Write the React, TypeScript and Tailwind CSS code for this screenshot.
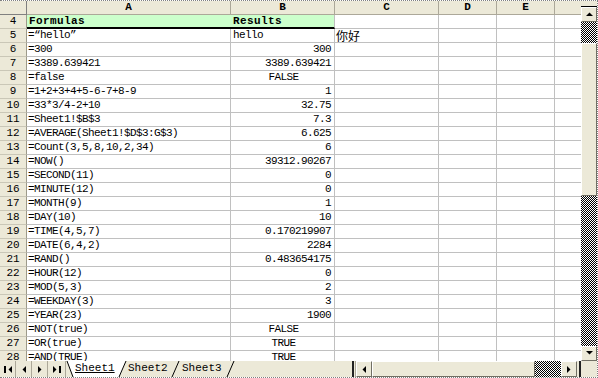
import React, { useId } from 'react';

type Align = 'l' | 'r' | 'c';
const rows: [number, string, string, Align][] = [
  [5, '=“hello”', 'hello', 'l'],
  [6, '=300', '300', 'r'],
  [7, '=3389.639421', '3389.639421', 'r'],
  [8, '=false', 'FALSE', 'c'],
  [9, '=1+2+3+4+5-6-7+8-9', '1', 'r'],
  [10, '=33*3/4-2+10', '32.75', 'r'],
  [11, '=Sheet1!$B$3', '7.3', 'r'],
  [12, '=AVERAGE(Sheet1!$D$3:G$3)', '6.625', 'r'],
  [13, '=Count(3,5,8,10,2,34)', '6', 'r'],
  [14, '=NOW()', '39312.90267', 'r'],
  [15, '=SECOND(11)', '0', 'r'],
  [16, '=MINUTE(12)', '0', 'r'],
  [17, '=MONTH(9)', '1', 'r'],
  [18, '=DAY(10)', '10', 'r'],
  [19, '=TIME(4,5,7)', '0.170219907', 'r'],
  [20, '=DATE(6,4,2)', '2284', 'r'],
  [21, '=RAND()', '0.483654175', 'r'],
  [22, '=HOUR(12)', '0', 'r'],
  [23, '=MOD(5,3)', '2', 'r'],
  [24, '=WEEKDAY(3)', '3', 'r'],
  [25, '=YEAR(23)', '1900', 'r'],
  [26, '=NOT(true)', 'FALSE', 'c'],
  [27, '=OR(true)', 'TRUE', 'c'],
  [28, '=AND(TRUE)', 'TRUE', 'c'],
];

function Checker() {
  const raw = useId();
  const id = 'chk' + raw.replace(/[^a-zA-Z0-9]/g, '');
  return (
    <svg width="100%" height="100%" className="block">
      <defs>
        <pattern id={id} width="2" height="2" patternUnits="userSpaceOnUse">
          <rect width="2" height="2" fill="#ffffff" />
          <rect width="1" height="1" fill="#000000" />
          <rect x="1" y="1" width="1" height="1" fill="#000000" />
        </pattern>
      </defs>
      <rect width="100%" height="100%" fill={`url(#${id})`} />
    </svg>
  );
}

function Btn({ children, className = '' }: { children?: React.ReactNode; className?: string }) {
  return (
    <div
      className={`flex items-center justify-center bg-[#ECE9D8] border border-t-white border-l-white border-b-[#716F64] border-r-[#716F64] ${className}`}
    >
      {children}
    </div>
  );
}

const Up = () => (
  <svg width="7" height="4" className="block"><polygon points="0,4 7,4 3.5,0.5" fill="#000" /></svg>
);
const Down = () => (
  <svg width="7" height="4" className="block"><polygon points="0,0 7,0 3.5,3.5" fill="#000" /></svg>
);
const Left = ({ bar = false }: { bar?: boolean }) => (
  <svg width={bar ? 8 : 4} height="7" className="block">
    {bar && <rect x="0" y="0" width="2" height="7" fill="#000" />}
    <polygon points={bar ? '8,0 8,7 4.5,3.5' : '4,0 4,7 0.5,3.5'} fill="#000" />
  </svg>
);
const Right = ({ bar = false }: { bar?: boolean }) => (
  <svg width={bar ? 8 : 4} height="7" className="block">
    <polygon points="0,0 0,7 3.5,3.5" fill="#000" />
    {bar && <rect x="6" y="0" width="2" height="7" fill="#000" />}
  </svg>
);

const mono = "font-['Liberation_Mono','Noto_Sans_CJK_SC',monospace]";
const cell = 'h-[14px] border-r border-b border-[#C0C0C0] overflow-hidden whitespace-nowrap leading-[13px]';
const rowHead =
  'w-[27px] h-[14px] shrink-0 bg-[#ECE9D8] border-r border-r-[#9D9A8A] border-b border-b-[#CAC7B7] flex items-center justify-center text-[11px] leading-none text-black font-[\'Liberation_Sans\',sans-serif] tracking-normal';
const colHead =
  'h-[14px] shrink-0 bg-[#ECE9D8] border-r border-r-[#ACA899] border-b border-b-[#ACA899] flex items-center justify-center text-[11px] font-bold leading-none tracking-normal';

function Grid() {
  return (
    <div className={`w-[581px] h-[360px] overflow-hidden bg-white ${mono} text-[11px] tracking-[-0.6px] text-black`}>
      {/* header */}
      <div className="flex">
        <div className="w-[27px] h-[14px] shrink-0 bg-[#ECE9D8] border-r border-r-[#808080] border-b border-b-[#808080]" />
        <div className={`${colHead} w-[204px] border-b-[#808080] border-r-[#404040]`}>A</div>
        <div className={`${colHead} w-[104px]`}>B</div>
        <div className={`${colHead} w-[104px]`}>C</div>
        <div className={`${colHead} w-[58px]`}>D</div>
        <div className={`${colHead} w-[58px]`}>E</div>
        <div className={`${colHead} w-[58px]`}></div>
      </div>
      {/* row 4 */}
      <div className="flex">
        <div className={rowHead}>4</div>
        <div className="w-[204px] h-[14px] shrink-0 bg-[#CCFFCC] border-b-2 border-black pl-[2px] font-bold tracking-[0.4px] leading-[12px]">
          Formulas
        </div>
        <div className="w-[104px] h-[14px] shrink-0 bg-[#CCFFCC] border-r border-r-[#C0C0C0] border-b-2 border-black pl-[2px] font-bold tracking-[0.4px] leading-[12px]">
          Results
        </div>
        <div className={`${cell} w-[104px] shrink-0`} />
        <div className={`${cell} w-[58px] shrink-0`} />
        <div className={`${cell} w-[58px] shrink-0`} />
        <div className={`${cell} w-[58px] shrink-0`} />
      </div>
      {rows.map(([n, a, b, al]) => (
        <div className="flex" key={n}>
          <div className={rowHead}>{n}</div>
          <div className={`${cell} w-[204px] shrink-0 pl-[1px]`}>{a}</div>
          <div
            className={`${cell} w-[104px] shrink-0 ${
              al === 'r' ? 'text-right pr-[3px]' : al === 'c' ? 'text-center pl-[2px]' : 'pl-[2px]'
            }`}
          >
            {b}
          </div>
          <div className={`${cell} w-[104px] shrink-0 pl-[1px] tracking-normal flex items-center`}>
            {n === 5 ? (
              <span className="font-['Noto_Sans_CJK_SC',sans-serif] text-[12px] leading-[13px]">你好</span>
            ) : null}
          </div>
          <div className={`${cell} w-[58px] shrink-0`} />
          <div className={`${cell} w-[58px] shrink-0`} />
          <div className={`${cell} w-[58px] shrink-0`} />
        </div>
      ))}
    </div>
  );
}

function VScroll() {
  return (
    <div className="w-[16px] h-[360px] flex flex-col bg-[#ECE9D8]">
      <div className="h-[6px] border-b border-black bg-[#ECE9D8]" />
      <Btn className="h-[16px]">
        <Up />
      </Btn>
      <div className="h-[21px]">
        <Checker />
      </div>
      <div className="h-[164px] bg-[#ECE9D8] border border-t-white border-l-white border-b-[#716F64] border-r-[#716F64]" />
      <div className="flex-1">
        <Checker />
      </div>
      <Btn className="h-[16px]">
        <Down />
      </Btn>
    </div>
  );
}

function Slant({ dir, w, fillLeft = false, fillRight = false }: { dir: 'back' | 'fwd'; w: number; fillLeft?: boolean; fillRight?: boolean }) {
  return (
    <svg width={w} height="16" className="block shrink-0">
      {dir === 'back' ? (
        <>
          {fillRight && <polygon points={`1,0 ${w},0 ${w},16 7,16`} fill="#fff" />}
          <line x1="1" y1="0" x2="7" y2="16" stroke="#000" strokeWidth="1" />
        </>
      ) : (
        <>
          {fillLeft && <polygon points="0,0 8,0 1,16 0,16" fill="#fff" />}
          <line x1="1" y1="16" x2="8" y2="0" stroke="#000" strokeWidth="1" />
        </>
      )}
    </svg>
  );
}

function BottomBar() {
  return (
    <div className="flex h-[16px] bg-[#ECE9D8]">
      <div className="flex w-[66px] shrink-0">
        <div className="w-[16px] flex items-center justify-center border-r border-[#ACA899]">
          <Left bar />
        </div>
        <div className="w-[16px] flex items-center justify-center border-r border-[#ACA899]">
          <Left />
        </div>
        <div className="w-[16px] flex items-center justify-center border-r border-[#ACA899]">
          <Right />
        </div>
        <div className="w-[18px] flex items-center justify-center border-r border-[#ACA899]">
          <Right bar />
        </div>
      </div>
      <div className="flex w-[286px] shrink-0 font-['Liberation_Mono',monospace] text-[11px] leading-[15px] text-black">
        <Slant dir="back" w={9} fillRight />
        <div className="w-[43px] bg-white underline underline-offset-1 shrink-0">Sheet1</div>
        <Slant dir="fwd" w={10} fillLeft />
        <div className="w-[43px] shrink-0">Sheet2</div>
        <Slant dir="fwd" w={11} />
        <div className="w-[44px] shrink-0">Sheet3</div>
        <Slant dir="fwd" w={9} />
      </div>
      <div className="w-[4px] shrink-0 border-l-2 border-l-[#222] border-r border-r-[#ACA899]" />
      <Btn className="w-[16px] shrink-0">
        <Left />
      </Btn>
      <div className="w-[163px] shrink-0 bg-[#ECE9D8] border border-t-white border-l-white border-b-[#716F64] border-r-[#716F64]" />
      <div className="w-[26px] shrink-0">
        <Checker />
      </div>
      <Btn className="w-[16px] shrink-0">
        <Right />
      </Btn>
      <div className="w-[4px] shrink-0 border-r-2 border-r-[#222]" />
      <div className="w-[16px] shrink-0 bg-[#ECE9D8]" />
    </div>
  );
}

export default function App() {
  return (
    <div className="w-[598px] h-[378px] overflow-hidden bg-white border-t border-r border-b border-dotted border-[#808080]">
      <div className="flex">
        <Grid />
        <VScroll />
      </div>
      <BottomBar />
    </div>
  );
}
